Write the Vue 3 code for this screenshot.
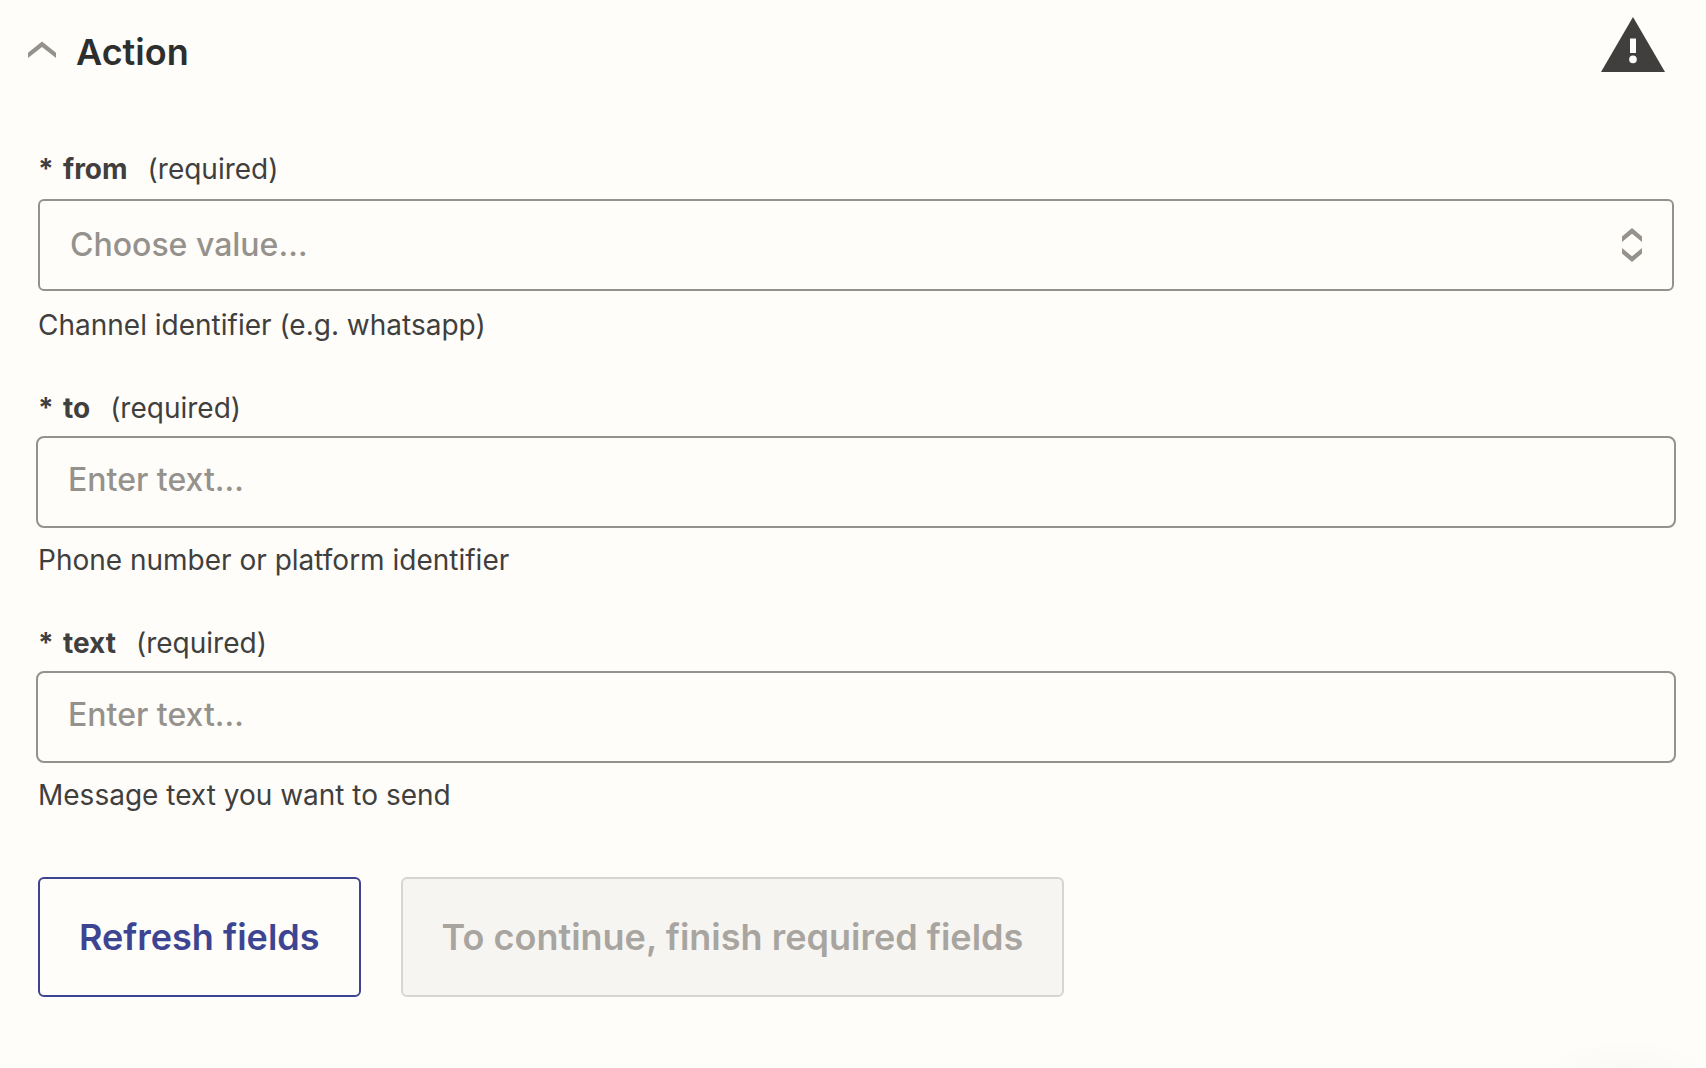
<script setup>
import { ref } from 'vue'

const open = ref(true)
const from = ref('')
const textFields = ref([
  { id: 'to', help: 'Phone number or platform identifier', value: '' },
  { id: 'text', help: 'Message text you want to send', value: '' },
])
</script>

<template>
  <main class="step">
    <header class="header">
      <h2 class="title">
        <button class="toggle" type="button" :aria-expanded="open" @click="open = !open">
          <svg class="chevron" width="28" height="18" viewBox="0 0 28 18" aria-hidden="true">
            <path d="M0 17V11.8L14 0.5L28 11.8V17L14 6Z" fill="#95928e" />
          </svg>
          Action
        </button>
      </h2>
      <svg class="warning" width="64" height="55" viewBox="0 0 64 55" role="img" aria-label="Warning">
        <path d="M32 0L64 55H0Z" fill="#403f3e" />
        <path d="M29 21.5H35V36H29Z" fill="#fffdf9" />
        <circle cx="32" cy="42.4" r="3.8" fill="#fffdf9" />
      </svg>
    </header>

    <form v-show="open" class="form" @submit.prevent>
      <div class="field">
        <label class="label" for="from">
          <span class="star">*</span><strong class="name">from</strong><span>(required)</span>
        </label>
        <div class="select-wrap">
          <select id="from" v-model="from" class="control">
            <option value="">Choose value…</option>
            <option value="whatsapp">whatsapp</option>
          </select>
          <svg class="sort" width="20" height="34" viewBox="0 0 20 34" aria-hidden="true">
            <path d="M0 14V8.5L10 0L20 8.5V14L10 5.7Z" fill="#95928e" />
            <path d="M0 20V25.5L10 34L20 25.5V20L10 28.3Z" fill="#95928e" />
          </svg>
        </div>
        <p class="help">Channel identifier (e.g. whatsapp)</p>
      </div>

      <div v-for="field in textFields" :key="field.id" class="field text-field">
        <label class="label" :for="field.id">
          <span class="star">*</span><strong class="name">{{ field.id }}</strong><span>(required)</span>
        </label>
        <input :id="field.id" v-model="field.value" class="control" type="text" placeholder="Enter text…" />
        <p class="help">{{ field.help }}</p>
      </div>

      <div class="actions">
        <button class="btn refresh" type="button">Refresh fields</button>
        <button class="btn" type="submit" disabled>To continue, finish required fields</button>
      </div>
    </form>
    <div class="glow"></div>
  </main>
</template>

<style>
body {
  background: #fffdf9;
}
</style>

<style scoped>
.step {
  box-sizing: border-box;
  min-height: 100vh;
  padding-bottom: 32px;
  background: #fffdf9;
  color: #403f3e;
  font-family: Inter, "Liberation Sans", sans-serif;
  font-size: 28px;
  line-height: 36px;
}

.header {
  display: flex;
  justify-content: space-between;
  align-items: flex-start;
  padding: 17px 41px 0 28px;
}

.title {
  margin: 13px 0 0;
  font-size: 36px;
  line-height: 44px;
}

.toggle {
  display: flex;
  align-items: center;
  gap: 20px;
  padding: 0;
  border: 0;
  background: none;
  color: #2d2e2e;
  font: inherit;
  font-weight: 600;
  cursor: pointer;
}

.chevron {
  margin-bottom: 4px;
}

.form {
  display: flex;
  flex-direction: column;
  gap: 47px;
  padding: 77px 32px 0 38px;
}

.field {
  display: flex;
  flex-direction: column;
}

.label {
  display: flex;
  align-self: flex-start;
  margin-bottom: 12px;
}

.star {
  width: 25px;
  font-weight: 700;
}

.name {
  margin-right: 20px;
  font-weight: 700;
}

.select-wrap {
  display: flex;
  align-items: center;
}

.control {
  box-sizing: border-box;
  width: 100%;
  height: 92px;
  padding: 0 30px;
  border: 2px solid #95928e;
  border-radius: 6px;
  background: #fffdf9;
  color: #95928e;
  font: inherit;
  font-size: 32px;
  font-weight: 500;
}

select.control {
  appearance: none;
}

.sort {
  margin-left: -52px;
  margin-right: 32px;
  pointer-events: none;
}

.help {
  margin: 16px 0 0;
}

.text-field .label {
  margin-bottom: 10px;
}

.text-field .control {
  width: auto;
  margin: 0 -2px;
  padding-bottom: 6px;
  border-radius: 8px;
  color: #403f3e;
}

.text-field .control::placeholder {
  color: #95928e;
  opacity: 1;
}

.text-field .help {
  margin-top: 14px;
}

.actions {
  display: flex;
  gap: 40px;
  margin-top: 17px;
}

.btn {
  box-sizing: border-box;
  height: 120px;
  padding: 0 39px;
  border: 2px solid #d7d5d2;
  border-radius: 6px;
  background: #f7f5f2;
  color: #a8a5a0;
  font: inherit;
  font-size: 36px;
  font-weight: 600;
}

.refresh {
  border-color: #3d4592;
  background: #fffdf9;
  color: #3d4592;
  cursor: pointer;
}

.glow {
  position: fixed;
  right: 0;
  bottom: 0;
  width: 160px;
  height: 28px;
  background: radial-gradient(ellipse at 50% 100%, rgba(0, 0, 0, 0.016), transparent 70%);
  pointer-events: none;
}
</style>
